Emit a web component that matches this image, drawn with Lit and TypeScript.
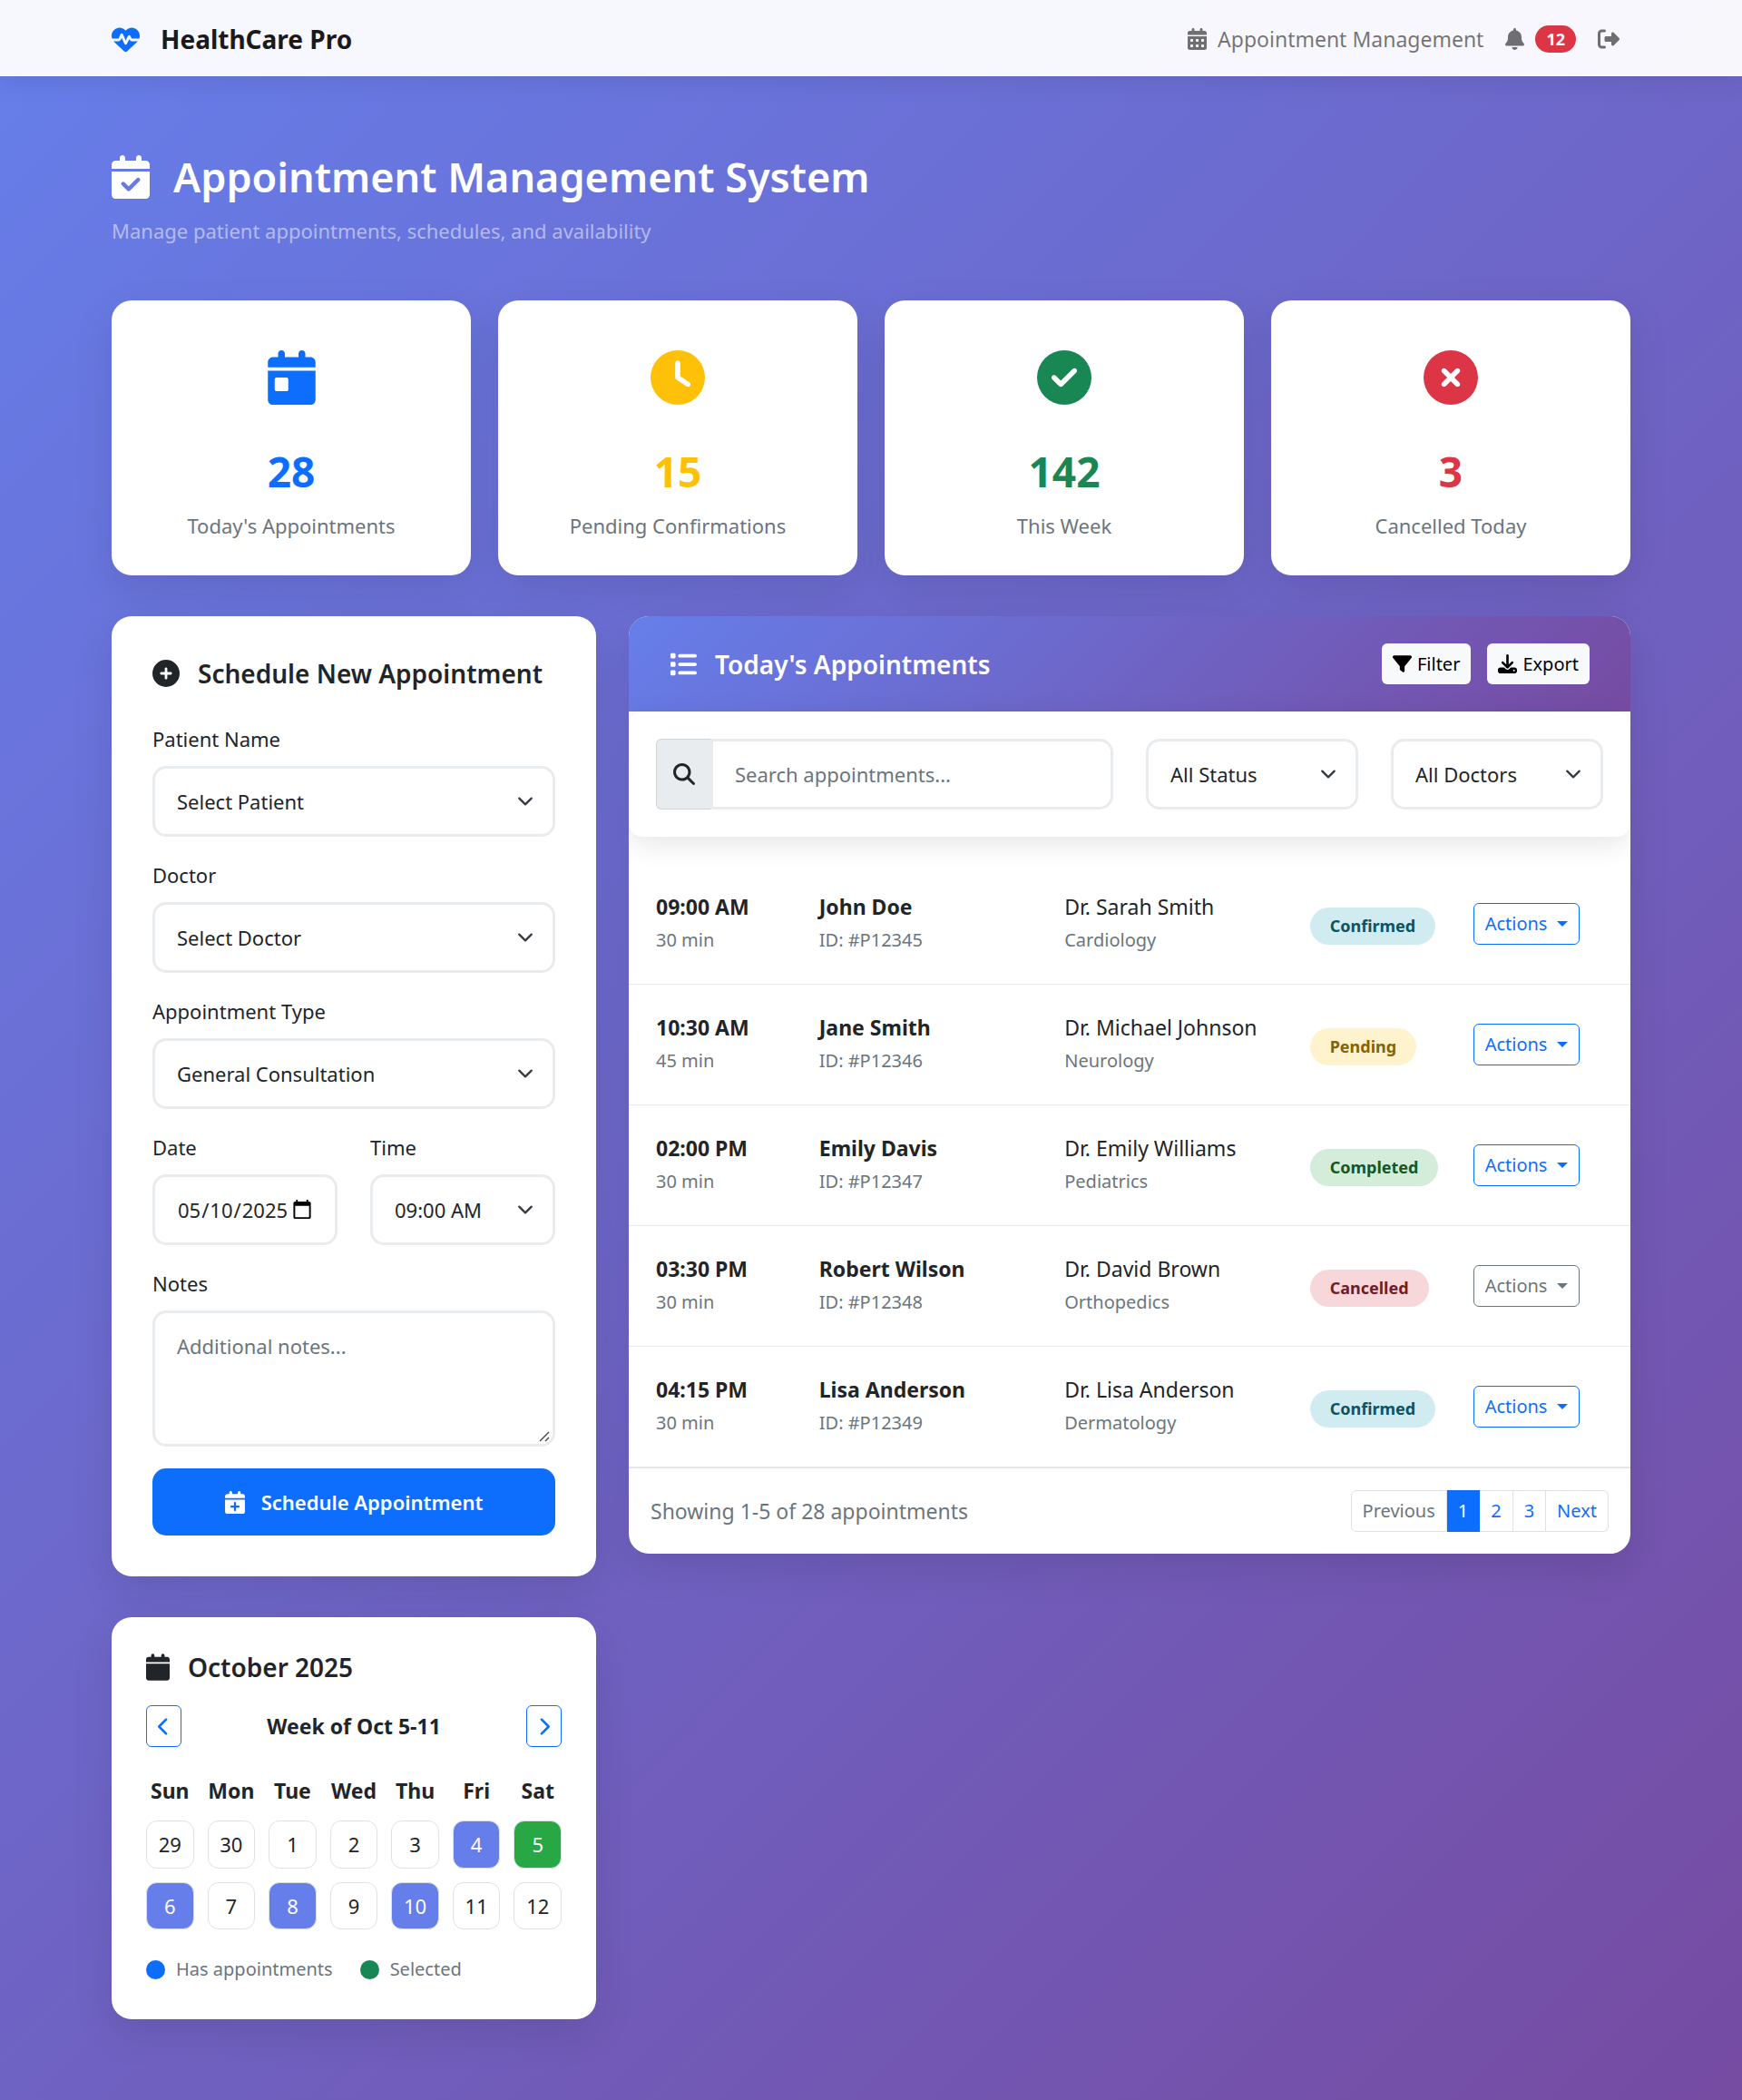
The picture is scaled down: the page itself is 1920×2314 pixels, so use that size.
import { LitElement, html, css, svg } from "lit";
import { customElement, property } from "lit/decorators.js";
import { classMap } from "lit/directives/class-map.js";

const CALENDAR =
  "M128 0c17.7 0 32 14.3 32 32V64H288V32c0-17.7 14.3-32 32-32s32 14.3 32 32V64h48c26.5 0 48 21.5 48 48v48H0V112C0 85.5 21.5 64 48 64H96V32c0-17.7 14.3-32 32-32zM0 192H448V464c0 26.5-21.5 48-48 48H48c-26.5 0-48-21.5-48-48V192z";
const DISC = "M256 0a256 256 0 1 1 0 512A256 256 0 1 1 256 0z";

/* Each glyph: [viewBox width, path data]. The viewBox height is always 512. */
const ICONS: Record<string, [number, string]> = {
  "heart-pulse": [
    512,
    "M228.3 469.1L47.6 300.4c-4.2-3.9-8.2-8.1-11.9-12.4h87c22.6 0 43-13.6 51.7-34.5l10.5-25.2 49.3 109.5c3.8 8.5 12.1 14 21.4 14.1s17.8-5 22-13.3L320 253.7l1.7 3.4c9.5 19 28.9 31 50.1 31H476.3c-3.7 4.3-7.7 8.5-11.9 12.4L283.7 469.1c-7.5 7-17.4 10.9-27.7 10.9s-20.2-3.9-27.7-10.9zM503.7 240h-132c-3 0-5.8-1.7-7.2-4.4l-23.2-46.3c-4.1-8.1-12.4-13.3-21.5-13.3s-17.4 5.1-21.5 13.3l-41.4 82.8L205.9 158.2c-3.9-8.7-12.7-14.3-22.2-14.1s-18.1 5.9-21.8 14.8l-31.8 76.3c-1.2 3-4.2 4.9-7.4 4.9H16c-2.6 0-5 .4-7.3 1.1C3 225.2 0 208.2 0 190.9v-5.8c0-69.9 50.5-129.5 119.4-141C165 36.5 211.4 51.4 244 84l12 12 12-12c32.6-32.6 79-47.5 124.6-39.9C461.5 55.6 512 115.2 512 185.1v5.8c0 16.9-2.8 33.5-8.3 49.1z",
  ],
  calendar: [448, CALENDAR],
  "calendar-days": [
    448,
    CALENDAR +
      "M64 272v32c0 8.8 7.2 16 16 16h32c8.8 0 16-7.2 16-16V272c0-8.8-7.2-16-16-16H80c-8.8 0-16 7.2-16 16zm128 0v32c0 8.8 7.2 16 16 16h32c8.8 0 16-7.2 16-16V272c0-8.8-7.2-16-16-16H208c-8.8 0-16 7.2-16 16zm144-16c-8.8 0-16 7.2-16 16v32c0 8.8 7.2 16 16 16h32c8.8 0 16-7.2 16-16V272c0-8.8-7.2-16-16-16H336zM64 400v32c0 8.8 7.2 16 16 16h32c8.8 0 16-7.2 16-16V400c0-8.8-7.2-16-16-16H80c-8.8 0-16 7.2-16 16zm144-16c-8.8 0-16 7.2-16 16v32c0 8.8 7.2 16 16 16h32c8.8 0 16-7.2 16-16V400c0-8.8-7.2-16-16-16H208zm112 16v32c0 8.8 7.2 16 16 16h32c8.8 0 16-7.2 16-16V400c0-8.8-7.2-16-16-16H336c-8.8 0-16 7.2-16 16z",
  ],
  "calendar-check": [
    448,
    CALENDAR +
      "M329 305c9.4-9.4 9.4-24.6 0-33.9s-24.6-9.4-33.9 0l-95 95-47-47c-9.4-9.4-24.6-9.4-33.9 0s-9.4 24.6 0 33.9l64 64c9.4 9.4 24.6 9.4 33.9 0L329 305z",
  ],
  "calendar-day": [
    448,
    CALENDAR +
      "M80 256c-8.8 0-16 7.2-16 16v96c0 8.8 7.2 16 16 16h96c8.8 0 16-7.2 16-16V272c0-8.8-7.2-16-16-16H80z",
  ],
  "calendar-plus": [
    448,
    CALENDAR +
      "M224 248c-13.3 0-24 10.7-24 24v56H144c-13.3 0-24 10.7-24 24s10.7 24 24 24h56v56c0 13.3 10.7 24 24 24s24-10.7 24-24V376h56c13.3 0 24-10.7 24-24s-10.7-24-24-24H248V272c0-13.3-10.7-24-24-24z",
  ],
  bell: [
    448,
    "M224 0c-17.7 0-32 14.3-32 32V51.2C119 66 64 130.6 64 208v18.8c0 47-17.3 92.4-48.5 127.6l-7.4 8.3c-8.4 9.4-10.4 22.9-5.3 34.4S19.4 416 32 416H416c12.6 0 24-7.4 29.2-18.9s3.1-25-5.3-34.4l-7.4-8.3C401.3 319.2 384 273.9 384 226.8V208c0-77.4-55-142-128-156.8V32c0-17.7-14.3-32-32-32zm45.3 493.3c12-12 18.7-28.3 18.7-45.3H224 160c0 17 6.7 33.3 18.7 45.3s28.3 18.7 45.3 18.7s33.3-6.7 45.3-18.7z",
  ],
  logout: [
    512,
    "M377.9 105.9L500.7 228.7c7.2 7.2 11.3 17.1 11.3 27.3s-4.1 20.1-11.3 27.3L377.9 406.1c-6.4 6.4-15 9.9-24 9.9c-18.7 0-33.9-15.2-33.9-33.9l0-62.1-128 0c-17.7 0-32-14.3-32-32l0-64c0-17.7 14.3-32 32-32l128 0 0-62.1c0-18.7 15.2-33.9 33.9-33.9c9 0 17.6 3.6 24 9.9zM160 96L96 96c-17.7 0-32 14.3-32 32l0 256c0 17.7 14.3 32 32 32l64 0c17.7 0 32 14.3 32 32s-14.3 32-32 32l-64 0c-53 0-96-43-96-96L0 128C0 75 43 32 96 32l64 0c17.7 0 32 14.3 32 32s-14.3 32-32 32z",
  ],
  clock: [
    512,
    DISC +
      "M232 120V256c0 8 4 15.5 10.7 20l96 64c11 7.4 25.9 4.4 33.3-6.7s4.4-25.9-6.7-33.3L280 243.2V120c0-13.3-10.7-24-24-24s-24 10.7-24 24z",
  ],
  "circle-check": [
    512,
    DISC +
      "M369 209L241 337c-9.4 9.4-24.6 9.4-33.9 0l-64-64c-9.4-9.4-9.4-24.6 0-33.9s24.6-9.4 33.9 0l47 47L335 175c9.4-9.4 24.6-9.4 33.9 0s9.4 24.6 0 33.9z",
  ],
  "circle-xmark": [
    512,
    DISC +
      "M175 175c9.4-9.4 24.6-9.4 33.9 0l47 47 47-47c9.4-9.4 24.6-9.4 33.9 0s9.4 24.6 0 33.9l-47 47 47 47c9.4 9.4 9.4 24.6 0 33.9s-24.6 9.4-33.9 0l-47-47-47 47c-9.4 9.4-24.6 9.4-33.9 0s-9.4-24.6 0-33.9l47-47-47-47c-9.4-9.4-9.4-24.6 0-33.9z",
  ],
  "circle-plus": [
    512,
    DISC +
      "M232 344V280H168c-13.3 0-24-10.7-24-24s10.7-24 24-24h64V168c0-13.3 10.7-24 24-24s24 10.7 24 24v64h64c13.3 0 24 10.7 24 24s-10.7 24-24 24H280v64c0 13.3-10.7 24-24 24s-24-10.7-24-24z",
  ],
  circle: [512, DISC],
  list: [
    512,
    "M40 48C26.7 48 16 58.7 16 72v48c0 13.3 10.7 24 24 24H88c13.3 0 24-10.7 24-24V72c0-13.3-10.7-24-24-24H40zM192 64c-17.7 0-32 14.3-32 32s14.3 32 32 32H480c17.7 0 32-14.3 32-32s-14.3-32-32-32H192zm0 160c-17.7 0-32 14.3-32 32s14.3 32 32 32H480c17.7 0 32-14.3 32-32s-14.3-32-32-32H192zm0 160c-17.7 0-32 14.3-32 32s14.3 32 32 32H480c17.7 0 32-14.3 32-32s-14.3-32-32-32H192zM16 232v48c0 13.3 10.7 24 24 24H88c13.3 0 24-10.7 24-24V232c0-13.3-10.7-24-24-24H40c-13.3 0-24 10.7-24 24zM40 368c-13.3 0-24 10.7-24 24v48c0 13.3 10.7 24 24 24H88c13.3 0 24-10.7 24-24V392c0-13.3-10.7-24-24-24H40z",
  ],
  filter: [
    512,
    "M3.9 54.9C10.5 40.9 24.5 32 40 32H472c15.5 0 29.5 8.9 36.1 22.9s4.6 30.5-5.2 42.5L320 320.9V448c0 12.1-6.8 23.2-17.7 28.6s-23.8 4.3-33.5-3l-64-48c-8.1-6-12.8-15.5-12.8-25.6V320.9L9 97.3C-.7 85.4-2.8 68.8 3.9 54.9z",
  ],
  download: [
    512,
    "M288 32c0-17.7-14.3-32-32-32s-32 14.3-32 32V274.7l-73.4-73.4c-12.5-12.5-32.8-12.5-45.3 0s-12.5 32.8 0 45.3l128 128c12.5 12.5 32.8 12.5 45.3 0l128-128c12.5-12.5 12.5-32.8 0-45.3s-32.8-12.5-45.3 0L288 274.7V32zM64 352c-35.3 0-64 28.7-64 64v32c0 35.3 28.7 64 64 64H448c35.3 0 64-28.7 64-64V416c0-35.3-28.7-64-64-64H346.5l-45.3 45.3c-25 25-65.5 25-90.5 0L165.5 352H64zm368 56a24 24 0 1 1 0 48 24 24 0 1 1 0-48z",
  ],
  search: [
    512,
    "M416 208c0 45.9-14.9 88.3-40 122.7L502.6 457.4c12.5 12.5 12.5 32.8 0 45.3s-32.8 12.5-45.3 0L330.7 376c-34.4 25.2-76.8 40-122.7 40C93.1 416 0 322.9 0 208S93.1 0 208 0S416 93.1 416 208zM208 352a144 144 0 1 0 0-288 144 144 0 1 0 0 288z",
  ],
  "chevron-left": [
    320,
    "M9.4 233.4c-12.5 12.5-12.5 32.8 0 45.3l192 192c12.5 12.5 32.8 12.5 45.3 0s12.5-32.8 0-45.3L77.3 256 246.6 86.6c12.5-12.5 12.5-32.8 0-45.3s-32.8-12.5-45.3 0l-192 192z",
  ],
  "chevron-right": [
    320,
    "M310.6 233.4c12.5 12.5 12.5 32.8 0 45.3l-192 192c-12.5 12.5-32.8 12.5-45.3 0s-12.5-32.8 0-45.3L242.7 256 73.4 86.6c-12.5-12.5-12.5-32.8 0-45.3s32.8-12.5 45.3 0l192 192z",
  ],
};

@customElement("app-icon")
class AppIcon extends LitElement {
  @property() name = "calendar";
  @property({ type: Number }) size = 24;

  static styles = css`
    :host {
      display: inline-flex;
      flex: none;
    }
    .glyph {
      display: block;
      fill: currentColor;
      fill-rule: evenodd;
    }
  `;

  render() {
    const [width, path] = ICONS[this.name];
    return html`<svg
      class="glyph"
      viewBox="0 0 ${width} 512"
      height=${this.size}
      width=${Math.round((this.size * width) / 512)}
      aria-hidden="true"
    >
      ${svg`<path d=${path}></path>`}
    </svg>`;
  }
}

const STATS = [
  { icon: "calendar-day", value: "28", label: "Today's Appointments", tone: "primary" },
  { icon: "clock", value: "15", label: "Pending Confirmations", tone: "warning" },
  { icon: "circle-check", value: "142", label: "This Week", tone: "success" },
  { icon: "circle-xmark", value: "3", label: "Cancelled Today", tone: "danger" },
];

const APPOINTMENTS = [
  { time: "09:00 AM", length: "30 min", patient: "John Doe", id: "#P12345", doctor: "Dr. Sarah Smith", field: "Cardiology", status: "Confirmed" },
  { time: "10:30 AM", length: "45 min", patient: "Jane Smith", id: "#P12346", doctor: "Dr. Michael Johnson", field: "Neurology", status: "Pending" },
  { time: "02:00 PM", length: "30 min", patient: "Emily Davis", id: "#P12347", doctor: "Dr. Emily Williams", field: "Pediatrics", status: "Completed" },
  { time: "03:30 PM", length: "30 min", patient: "Robert Wilson", id: "#P12348", doctor: "Dr. David Brown", field: "Orthopedics", status: "Cancelled" },
  { time: "04:15 PM", length: "30 min", patient: "Lisa Anderson", id: "#P12349", doctor: "Dr. Lisa Anderson", field: "Dermatology", status: "Confirmed" },
];

const WEEKDAYS = ["Sun", "Mon", "Tue", "Wed", "Thu", "Fri", "Sat"];
const WEEKS = [
  [29, 30, 1, 2, 3, 4, 5],
  [6, 7, 8, 9, 10, 11, 12],
];
const BUSY_DAYS = [4, 6, 8, 10];
const SELECTED_DAY = 5;

@customElement("app-root")
class AppRoot extends LitElement {
  static styles = css`
    :host {
      display: block;
      min-height: 100vh;
      box-sizing: border-box;
      font-family: "Noto Sans", "Open Sans", sans-serif;
      font-size: 22px;
      line-height: 36px;
      color: #212529;
      background: linear-gradient(135deg, #667eea 0%, #764ba2 100%);
    }
    *,
    *::before,
    *::after {
      box-sizing: border-box;
    }
    h1,
    h2,
    p,
    ul {
      margin: 0;
      padding: 0;
    }
    a {
      color: inherit;
      text-decoration: none;
    }
    button,
    input,
    select,
    textarea {
      font: inherit;
      color: inherit;
      margin: 0;
    }
    button {
      cursor: pointer;
    }

    .container {
      max-width: 1710px;
      margin: 0 auto;
      padding: 0 18px;
    }

    /* Top bar */
    .topbar {
      background: rgba(255, 255, 255, 0.95);
      box-shadow: 0 3px 30px rgba(0, 0, 0, 0.1);
    }
    .topbar-row {
      display: flex;
      align-items: center;
      justify-content: space-between;
      min-height: 84px;
      padding-top: 2px;
    }
    .brand {
      display: flex;
      align-items: center;
      gap: 23px;
      font-size: 28px;
      font-weight: 700;
      color: #1a1a1a;
    }
    .brand-icon {
      color: #0d6efd;
    }
    .links {
      display: flex;
      align-items: center;
      gap: 24px;
      padding-right: 12px;
      font-size: 23px;
      color: rgba(0, 0, 0, 0.55);
    }
    .link {
      display: flex;
      align-items: center;
      gap: 12px;
    }
    .count {
      padding: 0 12px;
      border-radius: 15px;
      background: #dc3545;
      color: #fff;
      font-size: 18px;
      line-height: 30px;
      font-weight: 700;
    }

    /* Page heading */
    .page {
      padding-top: 82px;
      padding-bottom: 90px;
    }
    .page-title {
      display: flex;
      align-items: center;
      gap: 26px;
      font-size: 45px;
      line-height: 58px;
      font-weight: 600;
      color: #fff;
    }
    .page-note {
      margin-top: 12px;
      margin-bottom: 59px;
      color: rgba(255, 255, 255, 0.5);
    }

    /* Figures */
    .stats {
      display: grid;
      grid-template-columns: repeat(4, 1fr);
      gap: 30px;
      margin-bottom: 45px;
    }
    .card {
      background: #fff;
      border-radius: 22px;
      box-shadow: 0 15px 45px rgba(0, 0, 0, 0.1);
    }
    .stat {
      display: flex;
      flex-direction: column;
      align-items: center;
      padding: 55px 24px 37px;
    }
    .stat-value {
      margin-top: 43px;
      margin-bottom: 12px;
      font-size: 46px;
      line-height: 60px;
      font-weight: 700;
    }
    .stat-label {
      color: #6c757d;
    }
    .primary {
      color: #0d6efd;
    }
    .warning {
      color: #ffc107;
    }
    .success {
      color: #198754;
    }
    .danger {
      color: #dc3545;
    }

    /* Columns */
    .columns {
      display: grid;
      grid-template-columns: repeat(12, 1fr);
      column-gap: 36px;
      align-items: start;
    }
    .side {
      grid-column: span 4;
      display: grid;
      gap: 45px;
      min-width: 0;
    }
    .wide {
      grid-column: span 8;
      min-width: 0;
    }
    .card-title {
      display: flex;
      align-items: center;
      gap: 20px;
      font-size: 28px;
      line-height: 36px;
      font-weight: 600;
    }

    /* Form */
    .form-card {
      padding: 45px;
    }
    .form {
      display: grid;
      gap: 24px;
      margin-top: 36px;
    }
    .pair {
      display: grid;
      grid-template-columns: 1fr 1fr;
      gap: 36px;
    }
    .field {
      display: grid;
      gap: 12px;
      min-width: 0;
    }
    .control {
      display: block;
      width: 100%;
      min-width: 0;
      height: 78px;
      padding: 18px 24px;
      border: 3px solid #e9ecef;
      border-radius: 15px;
      background-color: #fff;
      outline: none;
    }
    .control::placeholder {
      color: #6c757d;
      opacity: 1;
    }
    .control:focus {
      border-color: #667eea;
    }
    .select {
      appearance: none;
      padding-right: 54px;
      background-image: url("data:image/svg+xml,%3csvg xmlns='http://www.w3.org/2000/svg' viewBox='0 0 16 16'%3e%3cpath fill='none' stroke='%23343a40' stroke-linecap='round' stroke-linejoin='round' stroke-width='2' d='m2 5 6 6 6-6'/%3e%3c/svg%3e");
      background-repeat: no-repeat;
      background-position: right 18px center;
      background-size: 24px 18px;
    }
    .date::-webkit-datetime-edit {
      padding: 0;
    }
    .date::-webkit-datetime-edit-fields-wrapper {
      padding: 0;
    }
    .date::-webkit-calendar-picker-indicator {
      margin-left: 0;
      padding: 0;
      width: 24px;
      height: 24px;
    }
    .notes {
      height: 150px;
      resize: vertical;
    }
    .notes::-webkit-resizer {
      background: url("data:image/svg+xml,%3csvg xmlns='http://www.w3.org/2000/svg' viewBox='0 0 15 15'%3e%3cpath fill='none' stroke='%23444' stroke-width='1.4' d='M1 12 11 2M7 12l4-4'/%3e%3c/svg%3e")
        no-repeat right bottom / 15px 15px;
    }
    .submit {
      display: flex;
      align-items: center;
      justify-content: center;
      gap: 18px;
      width: 100%;
      height: 74px;
      border: 0;
      border-radius: 15px;
      background: #0d6efd;
      color: #fff;
      font-weight: 600;
    }

    /* Calendar */
    .cal-card {
      padding: 37px 38px;
    }
    .cal-bar {
      display: flex;
      align-items: center;
      justify-content: space-between;
      margin-top: 24px;
      font-size: 23px;
      font-weight: 700;
    }
    .step {
      display: flex;
      align-items: center;
      justify-content: center;
      width: 39px;
      height: 46px;
      padding: 0;
      border: 1px solid #0d6efd;
      border-radius: 6px;
      background: transparent;
      color: #0d6efd;
    }
    .days {
      display: grid;
      grid-template-columns: repeat(7, minmax(0, 1fr));
      gap: 15px;
      margin-top: 30px;
      text-align: center;
    }
    .weekday {
      display: flex;
      justify-content: center;
      font-size: 23px;
      font-weight: 700;
    }
    .day {
      aspect-ratio: 1;
      padding: 0;
      border: 1px solid #dee2e6;
      border-radius: 12px;
      background: #fff;
    }
    .day.busy {
      background: #667eea;
      color: #fff;
    }
    .day.selected {
      background: #28a745;
      color: #fff;
    }
    .legend {
      display: flex;
      gap: 30px;
      margin-top: 26px;
      font-size: 20px;
      color: #6c757d;
      list-style: none;
    }
    .legend-item {
      display: flex;
      align-items: center;
      gap: 12px;
    }

    /* Appointment list */
    .list-card {
      overflow: hidden;
    }
    .list-head {
      display: flex;
      align-items: center;
      justify-content: space-between;
      padding: 30px 45px;
      background: linear-gradient(135deg, #667eea 0%, #764ba2 100%);
      color: #fff;
    }
    .tools {
      display: flex;
      gap: 18px;
    }
    .tool {
      display: flex;
      align-items: center;
      gap: 6px;
      height: 45px;
      padding: 0 12px;
      border: 0;
      border-radius: 6px;
      background: #f8f9fa;
      color: #000;
      font-size: 20px;
    }
    .filters {
      display: grid;
      grid-template-columns: repeat(12, 1fr);
      column-gap: 36px;
      padding: 30px;
      border-radius: 15px;
      box-shadow: 0 8px 30px rgba(0, 0, 0, 0.1);
    }
    .search {
      grid-column: span 6;
      display: flex;
    }
    .search-icon {
      display: flex;
      align-items: center;
      padding: 0 17px 0 18px;
      border: 1px solid #ced4da;
      border-right: 0;
      border-radius: 6px 0 0 6px;
      background: #e9ecef;
    }
    .search-input {
      flex: 1;
      border-radius: 0 15px 15px 0;
    }
    .filter {
      grid-column: span 3;
    }
    .rows {
      width: 100%;
      margin-top: 30px;
      border-collapse: separate;
      border-spacing: 0;
      table-layout: fixed;
      font-size: 23px;
    }
    .col-time {
      width: 19%;
    }
    .col-person {
      width: 24.5%;
    }
    .col-status {
      width: 16.3%;
    }
    .cell {
      height: 133px;
      padding: 0;
      border-bottom: 1px solid #e9ecef;
      vertical-align: middle;
    }
    .cell.first {
      padding-left: 30px;
    }
    .main-line {
      font-weight: 700;
    }
    .sub-line {
      font-size: 20px;
      line-height: 38px;
      color: #6c757d;
    }
    .badge {
      display: inline-block;
      margin-top: 5px;
      padding: 7px 22px;
      border-radius: 30px;
      font-size: 18px;
      line-height: 27px;
      font-weight: 700;
      vertical-align: middle;
    }
    .confirmed {
      background: #d1ecf1;
      color: #0c5460;
    }
    .pending {
      background: #fff3cd;
      color: #856404;
    }
    .completed {
      background: #d4edda;
      color: #155724;
    }
    .cancelled {
      background: #f8d7da;
      color: #721c24;
    }
    .actions {
      display: flex;
      align-items: center;
      gap: 11px;
      height: 46px;
      padding: 0 12px;
      border: 1px solid #0d6efd;
      border-radius: 6px;
      background: transparent;
      color: #0d6efd;
      font-size: 20px;
    }
    .actions.muted {
      border-color: #6c757d;
      color: #6c757d;
    }
    .actions::after {
      content: "";
      border: 6px solid transparent;
      border-top-color: currentColor;
      border-bottom: 0;
    }
    .list-foot {
      display: flex;
      align-items: center;
      justify-content: space-between;
      padding: 24px;
      border-top: 1px solid #dee2e6;
      font-size: 23px;
      color: #6c757d;
    }
    .pages {
      display: flex;
      list-style: none;
      font-size: 20px;
      line-height: 44px;
    }
    .page-link {
      display: block;
      padding: 0 12px;
      border: 1px solid #dee2e6;
      border-left-width: 0;
      color: #0d6efd;
    }
    .page-link.previous {
      border-left-width: 1px;
      border-radius: 6px 0 0 6px;
      color: #6c757d;
    }
    .page-link.current {
      border-color: #0d6efd;
      background: #0d6efd;
      color: #fff;
    }
    .page-link.next {
      border-radius: 0 6px 6px 0;
    }

    @media (max-width: 1400px) {
      .stats {
        grid-template-columns: repeat(2, 1fr);
      }
      .side,
      .wide {
        grid-column: span 12;
      }
      .columns {
        row-gap: 45px;
      }
    }
  `;

  private renderTopbar() {
    return html`<nav class="topbar">
      <div class="container topbar-row">
        <a class="brand" href="#">
          <app-icon class="brand-icon" name="heart-pulse" size="31"></app-icon>
          HealthCare Pro
        </a>
        <div class="links">
          <a class="link" href="#">
            <app-icon name="calendar-days"></app-icon>
            Appointment Management
          </a>
          <a class="link" href="#" aria-label="Notifications">
            <app-icon name="bell"></app-icon>
            <span class="count">12</span>
          </a>
          <a class="link" href="#" aria-label="Log out">
            <app-icon name="logout"></app-icon>
          </a>
        </div>
      </div>
    </nav>`;
  }

  private renderForm() {
    return html`<section class="card form-card">
      <h2 class="card-title">
        <app-icon name="circle-plus" size="30"></app-icon>
        Schedule New Appointment
      </h2>
      <form class="form" @submit=${(e: Event) => e.preventDefault()}>
        <div class="field">
          <label for="patient">Patient Name</label>
          <select id="patient" class="control select">
            <option>Select Patient</option>
          </select>
        </div>
        <div class="field">
          <label for="doctor">Doctor</label>
          <select id="doctor" class="control select">
            <option>Select Doctor</option>
          </select>
        </div>
        <div class="field">
          <label for="type">Appointment Type</label>
          <select id="type" class="control select">
            <option>General Consultation</option>
          </select>
        </div>
        <div class="pair">
          <div class="field">
            <label for="date">Date</label>
            <input id="date" class="control date" type="date" value="2025-05-10" />
          </div>
          <div class="field">
            <label for="time">Time</label>
            <select id="time" class="control select">
              <option>09:00 AM</option>
            </select>
          </div>
        </div>
        <div class="field">
          <label for="notes">Notes</label>
          <textarea id="notes" class="control notes" placeholder="Additional notes..."></textarea>
        </div>
        <button class="submit" type="submit">
          <app-icon name="calendar-plus" size="25"></app-icon>
          Schedule Appointment
        </button>
      </form>
    </section>`;
  }

  private renderCalendar() {
    return html`<section class="card cal-card">
      <h2 class="card-title">
        <app-icon name="calendar" size="30"></app-icon>
        October 2025
      </h2>
      <div class="cal-bar">
        <button class="step" type="button" aria-label="Previous week">
          <app-icon name="chevron-left" size="21"></app-icon>
        </button>
        <span>Week of Oct 5-11</span>
        <button class="step" type="button" aria-label="Next week">
          <app-icon name="chevron-right" size="21"></app-icon>
        </button>
      </div>
      <div class="days">
        ${WEEKDAYS.map((name) => html`<span class="weekday">${name}</span>`)}
        ${WEEKS.flat().map(
          (day) => html`<button
            type="button"
            class=${classMap({
              day: true,
              busy: BUSY_DAYS.includes(day),
              selected: day === SELECTED_DAY,
            })}
          >
            ${day}
          </button>`
        )}
      </div>
      <ul class="legend">
        <li class="legend-item">
          <app-icon class="primary" name="circle" size="21"></app-icon>
          Has appointments
        </li>
        <li class="legend-item">
          <app-icon class="success" name="circle" size="21"></app-icon>
          Selected
        </li>
      </ul>
    </section>`;
  }

  private renderList() {
    return html`<section class="card list-card">
      <header class="list-head">
        <h2 class="card-title">
          <app-icon name="list" size="30"></app-icon>
          Today's Appointments
        </h2>
        <div class="tools">
          <button class="tool" type="button">
            <app-icon name="filter" size="21"></app-icon>Filter
          </button>
          <button class="tool" type="button">
            <app-icon name="download" size="21"></app-icon>Export
          </button>
        </div>
      </header>
      <div class="filters">
        <div class="search">
          <span class="search-icon"><app-icon name="search"></app-icon></span>
          <input
            class="control search-input"
            type="text"
            aria-label="Search appointments"
            placeholder="Search appointments..."
          />
        </div>
        <select class="control select filter" aria-label="Status">
          <option>All Status</option>
        </select>
        <select class="control select filter" aria-label="Doctor">
          <option>All Doctors</option>
        </select>
      </div>
      <table class="rows" aria-label="Today's Appointments">
        <colgroup>
          <col class="col-time" />
          <col class="col-person" />
          <col class="col-person" />
          <col class="col-status" />
          <col />
        </colgroup>
        <tbody>
          ${APPOINTMENTS.map(
            (a) => html`<tr>
              <td class="cell first">
                <div class="main-line">${a.time}</div>
                <div class="sub-line">${a.length}</div>
              </td>
              <td class="cell">
                <div class="main-line">${a.patient}</div>
                <div class="sub-line">ID: ${a.id}</div>
              </td>
              <td class="cell">
                <div>${a.doctor}</div>
                <div class="sub-line">${a.field}</div>
              </td>
              <td class="cell">
                <span class="badge ${a.status.toLowerCase()}">${a.status}</span>
              </td>
              <td class="cell">
                <button
                  type="button"
                  class=${classMap({ actions: true, muted: a.status === "Cancelled" })}
                >
                  Actions
                </button>
              </td>
            </tr>`
          )}
        </tbody>
      </table>
      <footer class="list-foot">
        <span>Showing 1-5 of 28 appointments</span>
        <nav aria-label="Pages">
          <ul class="pages">
            <li><a class="page-link previous" href="#">Previous</a></li>
            <li><a class="page-link current" href="#" aria-current="page">1</a></li>
            <li><a class="page-link" href="#">2</a></li>
            <li><a class="page-link" href="#">3</a></li>
            <li><a class="page-link next" href="#">Next</a></li>
          </ul>
        </nav>
      </footer>
    </section>`;
  }

  render() {
    return html`
      ${this.renderTopbar()}
      <main class="container page">
        <h1 class="page-title">
          <app-icon name="calendar-check" size="48"></app-icon>
          Appointment Management System
        </h1>
        <p class="page-note">Manage patient appointments, schedules, and availability</p>
        <div class="stats">
          ${STATS.map(
            (s) => html`<div class="card stat">
              <app-icon class=${s.tone} name=${s.icon} size="60"></app-icon>
              <div class="stat-value ${s.tone}">${s.value}</div>
              <div class="stat-label">${s.label}</div>
            </div>`
          )}
        </div>
        <div class="columns">
          <div class="side">${this.renderForm()} ${this.renderCalendar()}</div>
          <div class="wide">${this.renderList()}</div>
        </div>
      </main>
    `;
  }
}
